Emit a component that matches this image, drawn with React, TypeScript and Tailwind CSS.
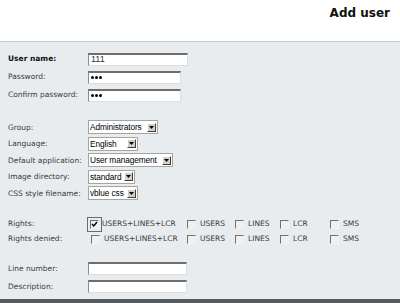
const font = "font-['DejaVu_Sans',Verdana,sans-serif]";
const labelCls = `${font} text-[7.5px] leading-none text-[#3a3a3a] whitespace-nowrap`;

const TextInput = ({ w, value, dots }: { w: string; value?: string; dots?: boolean }) => (
  <div
    className={`${w} h-[13px] bg-white border border-t-2 border-t-[#6e6e6e] border-l-[#8c8c8c] border-r-[#dedede] border-b-[#dedede] flex items-center pl-[2px]`}
  >
    {dots ? (
      <span className="flex gap-[1px]">
        <span className="w-[3px] h-[3px] rounded-full bg-black"></span>
        <span className="w-[3px] h-[3px] rounded-full bg-black"></span>
        <span className="w-[3px] h-[3px] rounded-full bg-black"></span>
      </span>
    ) : (
      <span className="font-['Liberation_Sans',Arial,sans-serif] text-[9px] leading-none text-[#333]">{value}</span>
    )}
  </div>
);

const Select = ({ w, value }: { w: string; value: string }) => (
  <div className={`${w} h-[14px] bg-white border border-[#a4a4a4] flex items-center`}>
    <span className="flex-1 min-w-0 pl-[1px] font-['Liberation_Sans',Arial,sans-serif] text-[8.3px] tracking-[-0.1px] leading-none text-black whitespace-nowrap">
      {value}
    </span>
    <span className="shrink-0 w-[9px] h-[9px] mr-[1px] bg-[#d4d0c8] border border-t-white border-l-white border-b-[#404040] border-r-[#404040] flex items-center justify-center">
      <svg width="5" height="3" viewBox="0 0 5 3">
        <path d="M0 0h5L2.5 3z" fill="#000" />
      </svg>
    </span>
  </div>
);

const Box = ({ checked }: { checked?: boolean }) => (
  <span className="w-[9px] h-[9px] border border-t-[#707070] border-l-[#707070] border-r-[#f2f2f2] border-b-[#f2f2f2] bg-[#eef0f2] flex items-center justify-center">
    {checked && (
      <svg width="7" height="7" viewBox="0 0 7 7">
        <path d="M1 3l1.8 2L6 1" stroke="#000" strokeWidth="1.4" fill="none" />
      </svg>
    )}
  </span>
);

const rights = ["USERS+LINES+LCR", "USERS", "LINES", "LCR", "SMS"];

const RightsRow = ({ label, first }: { label: string; first?: boolean }) => (
  <div className="flex items-center h-[15px]">
    <span className={`w-[80px] ${labelCls}`}>{label}</span>
    <div className="grid grid-cols-[99px_48px_45px_50px_auto] items-center">
      {rights.map((r, i) => (
        <div key={r} className={`flex items-center ${i === 0 ? "pl-[3px]" : ""}`}>
          {i === 0 && first ? (
            <span className="-ml-[4px] mr-[-4px] border border-[#6a6a6a] p-[2px] flex">
              <Box checked />
            </span>
          ) : (
            <Box />
          )}
          <span className={`ml-[4px] ${labelCls}`}>{r}</span>
        </div>
      ))}
    </div>
  </div>
);

const Row = ({ label, h, bold, children }: { label: string; h: string; bold?: boolean; children: React.ReactNode }) => (
  <div className={`flex items-center ${h}`}>
    <span className={`w-[80px] ${labelCls} ${bold ? "font-bold text-[#111]" : ""}`}>{label}</span>
    {children}
  </div>
);

export default function App() {
  return (
    <div className="w-[400px] h-[303px] bg-white flex flex-col overflow-hidden">
      <div className="h-[41px] flex items-start justify-end pr-[10px] pt-[4px]">
        <h1 className={`${font} text-[12px] font-bold text-[#111]`}>Add user</h1>
      </div>
      <div className="flex-1 bg-[#e8ecef] border-t border-[#c6cbd0] pl-[8px] pt-[8px] flex flex-col">
        <Row label="User name:" h="h-[18px]" bold>
          <TextInput w="w-[100px]" value="111" />
        </Row>
        <Row label="Password:" h="h-[18px]">
          <TextInput w="w-[93px]" dots />
        </Row>
        <Row label="Confirm password:" h="h-[18px]">
          <TextInput w="w-[93px]" dots />
        </Row>

        <div className="mt-[15px]">
          <Row label="Group:" h="h-[16.5px]">
            <Select w="w-[70px]" value="Administrators" />
          </Row>
          <Row label="Language:" h="h-[16.5px]">
            <Select w="w-[50px]" value="English" />
          </Row>
          <Row label="Default application:" h="h-[16.5px]">
            <Select w="w-[85px]" value="User management" />
          </Row>
          <Row label="Image directory:" h="h-[16.5px]">
            <Select w="w-[47px]" value="standard" />
          </Row>
          <Row label="CSS style filename:" h="h-[16.5px]">
            <Select w="w-[50px]" value="vblue css" />
          </Row>
        </div>

        <div className="mt-[15px]">
          <RightsRow label="Rights:" first />
          <RightsRow label="Rights denied:" />
        </div>

        <div className="mt-[13px]">
          <Row label="Line number:" h="h-[18px]">
            <TextInput w="w-[99px]" />
          </Row>
          <Row label="Description:" h="h-[18px]">
            <TextInput w="w-[99px]" />
          </Row>
        </div>
      </div>
      <div className="h-[4px] bg-[#555a5e]"></div>
    </div>
  );
}
